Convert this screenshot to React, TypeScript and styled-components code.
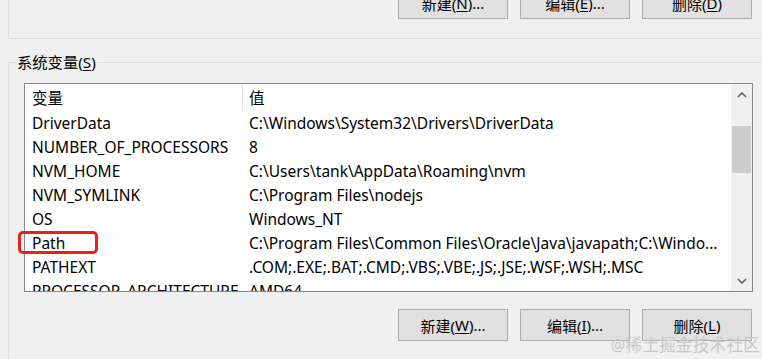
import React from "react";
import styled, { createGlobalStyle } from "styled-components";

const GlobalStyle = createGlobalStyle`
  html, body { margin: 0; padding: 0; background: #f0f0f0; overflow: hidden; }
  body { font-family: "Noto Sans", "Noto Sans CJK SC", sans-serif; color: #000; }
`;

const FONT = `"Noto Sans", "Noto Sans CJK SC", sans-serif`;

const Page = styled.div`
  position: relative;
  width: 762px;
  height: 359px;
  overflow: hidden;
  background: #f0f0f0;
  display: flex;
  flex-direction: column;
  padding-left: 8px;
  box-sizing: border-box;
  font-family: ${FONT};
  font-size: 15px;
`;

const TopGroup = styled.div`
  flex-shrink: 0;
  width: 760px;
  box-sizing: border-box;
  margin-top: -20px;
  border: 1px solid #dcdcdc;
  padding: 6px 14px 19px 15px;
`;

const ButtonRow = styled.div<{ $top?: number }>`
  display: flex;
  justify-content: flex-end;
  gap: 12px;
  margin-top: ${(p) => p.$top ?? 0}px;
  padding-right: 1px;
`;

const Button = styled.button`
  width: 110px;
  height: 32px;
  box-sizing: border-box;
  border: 1px solid #adadad;
  background: #e1e1e1;
  font-family: ${FONT};
  font-size: 15px;
  color: #000;
  padding: 0;
  display: flex;
  align-items: center;
  justify-content: center;
  u { text-underline-offset: 2px; }
`;

const SysGroup = styled.div`
  position: relative;
  flex-shrink: 0;
  width: 760px;
  box-sizing: border-box;
  margin-top: 23px;
  border: 1px solid #dcdcdc;
  border-bottom: none;
  padding: 20px 14px 40px 15px;
`;

const GroupLabel = styled.span`
  position: absolute;
  top: -11px;
  left: 7px;
  padding: 0 1px;
  line-height: 20px;
  background: #f0f0f0;
  font-size: 15.3px;
  u { text-underline-offset: 2px; }
`;

const ListBox = styled.div`
  width: 729px;
  height: 209px;
  box-sizing: border-box;
  border: 1px solid #828790;
  background: #fff;
  display: flex;
  font-size: 15.5px;
`;

const ListContent = styled.div`
  flex: 1;
  overflow: hidden;
  display: flex;
  flex-direction: column;
`;

const Grid = styled.div<{ $h: number }>`
  display: grid;
  grid-template-columns: 218px 1fr;
  height: ${(p) => p.$h}px;
  flex-shrink: 0;
  align-items: center;
  white-space: nowrap;
`;

const NameCell = styled.div<{ $header?: boolean }>`
  padding-left: 7px;
  height: 100%;
  display: flex;
  align-items: center;
  box-sizing: border-box;
  border-right: 1px solid ${(p) => (p.$header ? "#e5e5e5" : "transparent")};
`;

const ValueCell = styled.div`
  padding-left: 6px;
  height: 100%;
  display: flex;
  align-items: center;
  overflow: hidden;
`;

const ScrollBar = styled.div`
  width: 21px;
  background: #f0f0f0;
  display: flex;
  flex-direction: column;
  flex-shrink: 0;
`;

const ArrowBtn = styled.div`
  height: 21px;
  display: flex;
  align-items: center;
  justify-content: center;
  flex-shrink: 0;
`;

const Track = styled.div`
  flex: 1;
  display: flex;
  flex-direction: column;
  align-items: center;
`;

const Thumb = styled.div`
  width: 19px;
  height: 47px;
  margin-top: 21px;
  background: #cdcdcd;
`;

const Highlight = styled.div`
  position: absolute;
  left: 18px;
  top: 231px;
  width: 80px;
  height: 23px;
  box-sizing: border-box;
  border: 3px solid #e8221b;
  border-radius: 5px;
`;

const Watermark = styled.div`
  position: absolute;
  right: 2px;
  bottom: 3px;
  font-size: 16.5px;
  color: #c6c6c6;
  letter-spacing: 0.3px;
`;

const Chevron = ({ up }: { up?: boolean }) => (
  <svg width="10" height="6" viewBox="0 0 10 6">
    <polyline
      points={up ? "1,5 5,1 9,5" : "1,1 5,5 9,1"}
      fill="none"
      stroke="#606060"
      strokeWidth="1.6"
    />
  </svg>
);

const rows: [string, string][] = [
  ["DriverData", "C:\\Windows\\System32\\Drivers\\DriverData"],
  ["NUMBER_OF_PROCESSORS", "8"],
  ["NVM_HOME", "C:\\Users\\tank\\AppData\\Roaming\\nvm"],
  ["NVM_SYMLINK", "C:\\Program Files\\nodejs"],
  ["OS", "Windows_NT"],
  ["Path", "C:\\Program Files\\Common Files\\Oracle\\Java\\javapath;C:\\Windo..."],
  ["PATHEXT", ".COM;.EXE;.BAT;.CMD;.VBS;.VBE;.JS;.JSE;.WSF;.WSH;.MSC"],
  ["PROCESSOR_ARCHITECTURE", "AMD64"],
];

export default function App() {
  return (
    <>
      <GlobalStyle />
      <Page>
        <TopGroup>
          <ButtonRow>
            <Button>新建(<u>N</u>)...</Button>
            <Button>编辑(<u>E</u>)...</Button>
            <Button>删除(<u>D</u>)</Button>
          </ButtonRow>
        </TopGroup>
        <SysGroup>
          <GroupLabel>系统变量(<u>S</u>)</GroupLabel>
          <ListBox>
            <ListContent>
              <Grid $h={27}>
                <NameCell $header>变量</NameCell>
                <ValueCell>值</ValueCell>
              </Grid>
              {rows.map(([k, v]) => (
                <Grid $h={24} key={k}>
                  <NameCell>{k}</NameCell>
                  <ValueCell>{v}</ValueCell>
                </Grid>
              ))}
            </ListContent>
            <ScrollBar>
              <ArrowBtn><Chevron up /></ArrowBtn>
              <Track><Thumb /></Track>
              <ArrowBtn><Chevron /></ArrowBtn>
            </ScrollBar>
          </ListBox>
          <ButtonRow $top={17}>
            <Button>新建(<u>W</u>)...</Button>
            <Button>编辑(<u>I</u>)...</Button>
            <Button>删除(<u>L</u>)</Button>
          </ButtonRow>
        </SysGroup>
        <Highlight />
        <Watermark>@稀土掘金技术社区</Watermark>
      </Page>
    </>
  );
}
